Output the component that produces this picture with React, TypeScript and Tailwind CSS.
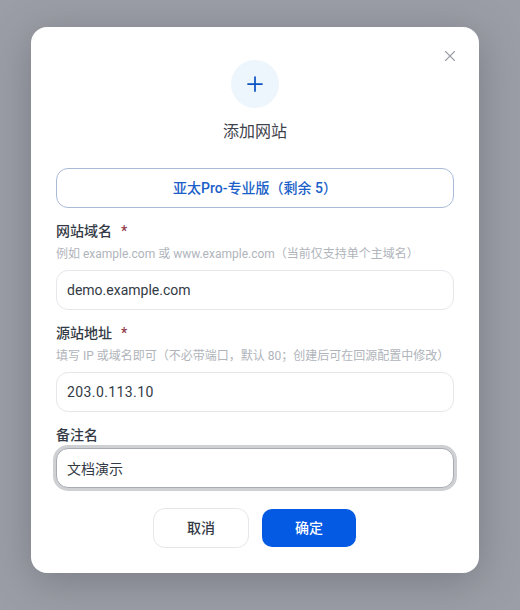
import React from 'react';
import { Plus, X } from 'lucide-react';

const font = 'font-["Roboto","Noto_Sans_CJK_SC",sans-serif]';

const Field: React.FC<{ label: string; required?: boolean; hint?: string; value: string; focused?: boolean; wide?: boolean }> = ({
  label,
  required,
  hint,
  value,
  focused,
  wide,
}) => (
  <div className="flex flex-col">
    <div className="flex h-[22px] items-center text-[14px] font-medium leading-[20px] text-[#333a45]">
      <span>{label}</span>
      {required && <span className="ml-[9px] text-[14px] text-[#8f3b48]">*</span>}
    </div>
    {hint && <div className="mt-[3px] h-[18px] whitespace-nowrap text-[12px] leading-[18px] text-[#b0b4bb]">{hint}</div>}
    <input
      readOnly
      value={value}
      className={`${wide ? 'tracking-[0.4px]' : ''} ${
        focused
          ? 'mt-[2px] h-[40px] w-full rounded-[12px] border border-[#a8abb2] bg-white px-[10px] text-[14px] text-[#333a45] outline-none ring-[3px] ring-[#cfd0d4]'
          : 'mt-[7px] h-[40px] w-full rounded-[12px] border border-[#e5e7eb] bg-white px-[10px] text-[14px] text-[#333a45] outline-none'
      }`}
    />
  </div>
);

export default function App() {
  return (
    <div className={`${font} flex h-[610px] w-[520px] justify-center overflow-hidden bg-[#9b9ea6] pr-[10px] pt-[27px]`}>
      <div className="relative h-[546px] w-[448px] rounded-[16px] bg-white px-[25px] pt-[33px] shadow-[0_8px_40px_rgba(60,64,72,0.35)]">
        <button className="absolute right-[20px] top-[20px] text-[#9a9ea6]">
          <X size={18} strokeWidth={1.5} />
        </button>

        <div className="flex flex-col items-center">
          <div className="flex h-[48px] w-[48px] items-center justify-center rounded-full bg-[#edf5fd]">
            <Plus size={24} strokeWidth={1.75} className="text-[#0d53c4]" />
          </div>
          <div className="mt-[13px] text-[16px] font-normal leading-[22px] text-[#3f444c]">添加网站</div>
        </div>

        <button className="mt-[25px] flex h-[40px] w-full items-center justify-center rounded-[12px] border border-[#a9bbd8] bg-white text-[14px] font-medium text-[#1a5fc8]">
          亚太Pro-专业版（剩余 5）
        </button>

        <div className="mt-[12px] flex flex-col gap-[12px]">
          <Field
            label="网站域名"
            required
            hint="例如 example.com 或 www.example.com（当前仅支持单个主域名）"
            value="demo.example.com"
          />
          <Field
            label="源站地址"
            required
            hint="填写 IP 或域名即可（不必带端口，默认 80；创建后可在回源配置中修改）"
            value="203.0.113.10"
            wide
          />
          <Field label="备注名" value="文档演示" focused />
        </div>

        <div className="mt-[20px] flex justify-center gap-[13px] pr-[1px]">
          <button className="h-[40px] w-[96px] rounded-[12px] border border-[#e5e7eb] bg-white text-[14px] font-medium text-[#333a45]">
            取消
          </button>
          <button className="h-[38px] w-[94px] self-center rounded-[10px] bg-[#045ae2] text-[14px] font-medium text-white">
            确定
          </button>
        </div>
      </div>
    </div>
  );
}
